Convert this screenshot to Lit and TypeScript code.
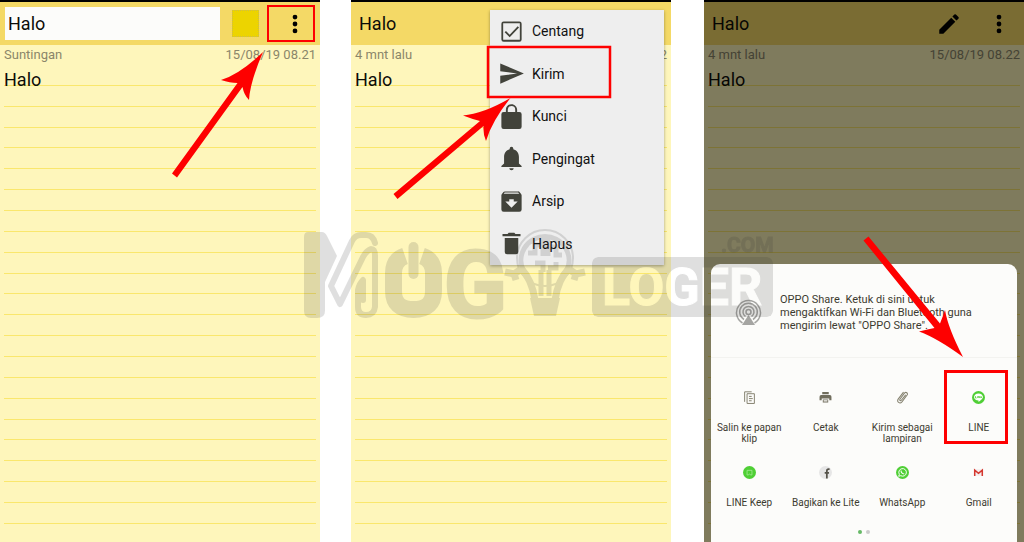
import { LitElement, html, svg, css, nothing, TemplateResult } from "lit";
import { customElement, property } from "lit/decorators.js";

const RULES = Array.from({ length: 22 }, (_, i) => i);

const ICONS: Record<string, string> = {
  check:
    "M19 3H5a2 2 0 0 0-2 2v14a2 2 0 0 0 2 2h14a2 2 0 0 0 2-2V5a2 2 0 0 0-2-2zm.4 16.4H4.6V4.6h14.8zM10.4 17.2L5.9 12.7l1.2-1.2 3.3 3.3 7.1-7.5 1.2 1.2z",
  send: "M2.01 21L23 12 2.01 3 2 10l15 2-15 2z",
  lock: "M18 8h-1V6c0-2.76-2.24-5-5-5S7 3.24 7 6v2H5a2 2 0 0 0-2 2v11a2 2 0 0 0 2 2h14a2 2 0 0 0 2-2V10a2 2 0 0 0-2-2zM8.7 6a3.3 3.3 0 0 1 6.6 0v2H8.7z",
  bell: "M12 22.5a2 2 0 0 0 2-1.8h-4a2 2 0 0 0 2 1.8zm6.6-6V10.6c0-3.4-1.9-6-5-6.8v-.7a1.6 1.6 0 0 0-3.2 0v.7c-3.1.8-5 3.4-5 6.8v5.9L3 18.6v1h18v-1z",
  archive:
    "M20.54 5.23l-1.39-1.68A1.45 1.45 0 0 0 18 3H6c-.47 0-.88.21-1.16.55L3.46 5.23C3.17 5.57 3 6.02 3 6.5V19a2 2 0 0 0 2 2h14a2 2 0 0 0 2-2V6.5c0-.48-.17-.93-.46-1.27zM12 17.5L6.5 12H10v-2h4v2h3.5zM5.12 5l.81-1h12l.94 1z",
  trash: "M6 19.5a2 2 0 0 0 2 2h8a2 2 0 0 0 2-2V7H6zM20 3.5h-4.5l-1-1h-5l-1 1H4v2h16z",
  pencil:
    "M3 17.25V21h3.75L17.81 9.94l-3.75-3.75zM20.71 7.04a1 1 0 0 0 0-1.41l-2.34-2.34a1 1 0 0 0-1.41 0l-1.83 1.83 3.75 3.75z",
  dots: "M12 7.8a2.2 2.2 0 1 0 0-4.4 2.2 2.2 0 0 0 0 4.4zm0 6.4a2.2 2.2 0 1 0 0-4.4 2.2 2.2 0 0 0 0 4.4zm0 6.4a2.2 2.2 0 1 0 0-4.4 2.2 2.2 0 0 0 0 4.4z",
};

const icon = (name: string) =>
  html`<svg class="icon" viewBox="0 0 24 24" aria-hidden="true"><path fill-rule="evenodd" d=${ICONS[name]}></path></svg>`;

const MENU: Array<[string, string]> = [
  ["check", "Centang"],
  ["send", "Kirim"],
  ["lock", "Kunci"],
  ["bell", "Pengingat"],
  ["archive", "Arsip"],
  ["trash", "Hapus"],
];

const TARGETS: Array<[string, TemplateResult]> = [
  [
    "Salin ke papan klip",
    svg`<g fill="none" stroke="#85826f" stroke-width="1.8"><path d="M3 20V1.500h13"/><path d="M7.500 5H21v18H7.500z"/><path d="M11 10h5M11 14h7M11 18h5"/></g>`,
  ],
  [
    "Cetak",
    svg`<path fill="#706d5c" fill-rule="evenodd" d="M6 2h12v4H6zM4 7.500h16a3 3 0 0 1 3 3V17h-4v-3H5v3H1v-6.500a3 3 0 0 1 3-3zM7 15.500h10V21H7zm1.500 1.500v2.500h7V17z"/>`,
  ],
  [
    "Kirim sebagai lampiran",
    svg`<path fill="none" stroke="#85826f" stroke-width="1.900" stroke-linecap="round" d="M17.500 7.500l-8 10c-1.200 1.200-3.500-.3-2.200-2.200L16 3.500c2.500-2.500 6.500.5 4.500 4L11 20c-4 4.500-10 0-7-5L13.500 2.500"/>`,
  ],
  [
    "LINE",
    svg`<circle cx="12" cy="12" r="12" fill="#4fcf35"/><path fill="#fff" d="M12 4.500c4.600 0 8.200 2.900 8.200 6.600 0 3.200-4.200 6.400-8.200 9.200v-2.800c-4.600 0-8.200-2.700-8.200-6.400s3.600-6.600 8.200-6.600z"/><path fill="none" stroke="#4fcf35" stroke-width="1.500" d="M6.500 9.500v3.500h2M10.500 9.500V13M12.500 13V9.500l2.500 3.500V9.500M17.500 10v3"/>`,
  ],
  [
    "LINE Keep",
    svg`<circle cx="12" cy="12" r="12" fill="#4fcf35"/><path fill="none" stroke="#a4ea92" stroke-width="1.500" d="M7.500 8h9v8.500h-2L12 15l-2.500 1.500h-2z"/>`,
  ],
  [
    "Bagikan ke Lite",
    svg`<circle cx="12" cy="12" r="12" fill="#e6e6e6"/><path fill="none" stroke="#55534a" stroke-width="3.200" d="M19.500 5.800h-1.800q-3.200 0-3.200 3.200v14M10.500 12.500h8"/>`,
  ],
  [
    "WhatsApp",
    svg`<circle cx="12" cy="12" r="12" fill="#4fcf35"/><path fill="none" stroke="#fff" stroke-width="1.800" d="M5 19l1.200-3.600a7 7 0 1 1 2.600 2.500z"/><path fill="none" stroke="#fff" stroke-width="2" d="M9.300 8.500c0 3.500 2.500 6 6 6.400"/>`,
  ],
  ["Gmail", svg`<path fill="#f3eeee" d="M4 6h16v12H4z"/><path fill="none" stroke="#d5382f" stroke-width="2.800" d="M5 18.500V7.500l7 6 7-6v11"/>`],
];

@customElement("note-screen")
class NoteScreen extends LitElement {
  @property() status = "";
  @property() date = "";
  @property({ type: Boolean }) editing = false;
  @property({ type: Boolean }) editable = false;
  @property({ type: Boolean }) dimmed = false;

  static styles = css`
    :host {
      display: flex;
      flex-direction: column;
      position: relative;
      overflow: hidden;
      min-width: 0;
      background: #fef6bb;
      border-top: 2px solid #000;
      font-family: Roboto, sans-serif;
      color: #0c0c08;
    }
    .bar {
      display: flex;
      align-items: center;
      height: 43px;
      padding: 0 12px 0 5px;
      box-sizing: border-box;
      background: #f4d966;
      font-size: 18px;
    }
    .title {
      flex: 1;
      min-width: 0;
      margin: 0;
      padding: 0 3px;
      font: inherit;
      color: inherit;
    }
    input.title {
      height: 33px;
      border: 0;
      border-radius: 0;
      box-sizing: border-box;
      background: #fcfcfa;
      margin-right: 12px;
    }
    button {
      display: grid;
      place-items: center;
      padding: 0;
      border: 0;
      background: none;
      width: 26px;
      height: 26px;
      color: #000;
    }
    .swatch {
      width: 27px;
      height: 27px;
      margin-right: 23px;
      background: #ecd400;
      border: 1px dotted #cdbb4a;
    }
    .edit {
      margin-right: 24px;
    }
    .icon {
      width: 26px;
      height: 26px;
      fill: currentColor;
    }
    .meta {
      display: flex;
      justify-content: space-between;
      padding: 0 4px;
      font-size: 13px;
      line-height: 20px;
      color: #8b866a;
    }
    .paper {
      flex: 1;
      display: flex;
      flex-direction: column;
      padding: 0 4px 18px;
      font-size: 18px;
      line-height: 30px;
    }
    .rule {
      flex: 1 1 0;
      min-height: 0;
      border-bottom: 1px solid #fae76c;
    }
    .dim {
      position: absolute;
      inset: 0;
      background: rgba(0, 0, 0, 0.5);
    }
  `;

  render() {
    return html`
      <header class="bar">
        ${this.editing
          ? html`<input class="title" type="text" aria-label="Judul" .value=${"Halo"} />
              <button class="swatch" aria-label="Warna"></button>`
          : html`<h1 class="title">Halo</h1>`}
        ${this.editable ? html`<button class="edit" aria-label="Edit">${icon("pencil")}</button>` : nothing}
        <button aria-label="Menu">${icon("dots")}</button>
      </header>
      <div class="meta"><span>${this.status}</span><time>${this.date}</time></div>
      <div class="paper">${RULES.map((i) => html`<div class="rule">${i === 0 ? "Halo" : nothing}</div>`)}</div>
      ${this.dimmed ? html`<div class="dim"></div>` : nothing}
      <slot></slot>
    `;
  }
}

@customElement("app-root")
class AppRoot extends LitElement {
  static styles = css`
    :host {
      display: block;
      position: relative;
      background: #fff;
      font-family: Roboto, sans-serif;
    }
    .screens {
      display: grid;
      grid-template-columns: 1fr 31px 1fr 33px 1fr;
      min-height: 100vh;
    }
    .first {
      grid-column: 1;
    }
    .second {
      grid-column: 3;
    }
    .third {
      grid-column: 5;
    }
    button {
      border: 0;
      padding: 0;
      background: none;
      font: inherit;
      color: inherit;
    }
    .menu {
      position: absolute;
      top: 8px;
      right: 7px;
      width: 174px;
      height: 255px;
      display: grid;
      grid-auto-rows: 1fr;
      background: #eee;
      box-shadow: 0 1px 3px rgba(0, 0, 0, 0.35);
    }
    .item {
      display: flex;
      align-items: center;
      gap: 7px;
      padding-left: 8px;
      font-size: 14px;
      color: #111;
      text-align: left;
    }
    .icon {
      width: 27px;
      height: 27px;
      fill: #42433b;
    }
    .sheet {
      position: absolute;
      left: 7px;
      right: 7px;
      bottom: 0;
      height: 278px;
      display: flex;
      flex-direction: column;
      border-radius: 9px 9px 0 0;
      background: #fcfcfa;
      color: #3c3b30;
    }
    .nearby {
      display: flex;
      flex: none;
      align-items: center;
      gap: 18px;
      height: 94px;
      padding: 4px 24px 0;
      box-sizing: border-box;
      border-bottom: 1px solid #f3f3f0;
      font-size: 11px;
      line-height: 13px;
    }
    .nearby svg {
      flex: none;
      width: 27px;
      height: 27px;
    }
    .nearby p {
      margin: 0;
    }
    .targets {
      display: grid;
      flex: none;
      grid-template-columns: repeat(4, 1fr);
      grid-template-rows: 75px 58px;
      padding-top: 33px;
    }
    .target {
      display: flex;
      flex-direction: column;
      align-items: center;
      gap: 18px;
      padding: 0 4px;
      font-size: 10px;
      line-height: 11px;
    }
    .target svg {
      flex: none;
      width: 13px;
      height: 13px;
    }
    .dots {
      display: flex;
      justify-content: center;
      gap: 4px;
      padding-top: 6px;
    }
    .dot {
      width: 4px;
      height: 4px;
      border-radius: 50%;
      background: #ccc;
    }
    .dot.on {
      background: #66b966;
    }
    .overlay {
      position: absolute;
      top: 0;
      left: 0;
      width: 100%;
      pointer-events: none;
    }
    .mark {
      font-family: "Liberation Sans Narrow", Roboto, sans-serif;
      font-weight: 700;
    }
  `;

  private overlay() {
    return html`<svg class="overlay" viewBox="0 0 1024 542" aria-hidden="true">
      <defs>
        <mask id="cut" maskUnits="userSpaceOnUse" x="590" y="250" width="190" height="75">
          <rect x="592" y="257" width="181" height="60" rx="6" fill="#fff" />
          <text class="mark" x="602" y="305" font-size="52" fill="#000" stroke="#000" stroke-width="1">LOGER</text>
        </mask>
      </defs>
      <g opacity="0.15">
        <path fill="#333" d="M308 232H322Q325 232 327 236L337 256L325 282V311Q325 318 317 318H311Q304 318 304 311V237Q304 232 308 232z" />
        <g fill="none" stroke="#333" stroke-width="6" stroke-linejoin="round" stroke-linecap="round">
          <path d="M375 243Q373 235 366 235H361Q355 235 352 241L331 286L340 304L363 257Q366 251 371 249Q375 249 375 256V307Q374 315 366 315Q358 315 358 307V290Q359 284 363 280V300" />
        </g>
        <path fill="none" stroke="#333" stroke-width="17" d="M405 256Q393.500 260 393.500 273V291Q393.500 309.500 413.500 309.500T433.500 291V273Q433.500 260 422 256" />
        <path stroke="#333" stroke-width="10" stroke-linecap="round" d="M413.500 247V274" />
        <text class="mark" x="444" y="317" font-size="92" fill="#333" stroke="#333" stroke-width="3">G</text>
        <g fill="none" stroke="#333">
          <circle cx="545" cy="258" r="28" stroke-width="2" />
          <path stroke-width="5" d="M524 272A24 24 0 1 1 566 272M543 238V256M548 238V256M543 245H535V253H528M548 247H556V255H562M535 263H543V272M548 268H556V262" />
          <path stroke-width="7" d="M521 268Q532 280 535 300M569 268Q558 280 555 300M505 272L514 274L520 270M585 272L576 274L570 270M514 274L516 280M576 274L574 280" />
          <path stroke-width="5" d="M541 270V296M549 270V296" />
        </g>
        <path fill="#333" d="M530 298H560L556 316H534z" />
        <rect x="592" y="257" width="181" height="60" rx="6" fill="#333" mask="url(#cut)" />
        <text class="mark" x="721" y="252" font-size="21" fill="#333" stroke="#333">.COM</text>
      </g>
      <g fill="none" stroke="#fe0000">
        <rect x="268" y="6" width="46" height="35" stroke-width="2" />
        <rect x="488" y="47" width="122" height="50" stroke-width="2.5" />
        <rect x="945.5" y="371.5" width="61" height="71" stroke-width="3" />
      </g>
      <g fill="#fe0000">
        <path d="M263 52Q240 74 221 80Q230 83 237.500 83L172 173.500L177 177.500L242.500 87Q244 95 249 100Q250 82 263 52z" />
        <path d="M510.500 98Q483 114 463 115.500Q472 119 480 121L393.500 194L397.500 199L483.500 126Q483 135 486 141Q492 121 510.500 98z" />
        <path d="M963 357Q937 338 919 331.500Q928 329 934.500 328L863.500 240.500L868.500 236.500L940 323.500Q943 316 945 310Q948 328 963 357z" />
      </g>
    </svg>`;
  }

  render() {
    return html`
      <main class="screens">
        <note-screen class="first" status="Suntingan" date="15/08/19 08.21" editing></note-screen>
        <note-screen class="second" status="4 mnt lalu" date="15/08/19 08.22">
          <nav class="menu">${MENU.map(([name, label]) => html`<button class="item">${icon(name)}<span>${label}</span></button>`)}</nav>
        </note-screen>
        <note-screen class="third" status="4 mnt lalu" date="15/08/19 08.22" editable dimmed>
          <section class="sheet">
            <div class="nearby">
              <svg viewBox="0 0 27 27" aria-hidden="true">
                <g fill="none" stroke="#a5a5a2" stroke-width="1.500">
                  <path d="M7.500 24A12 12 0 1 1 19.500 24" />
                  <path d="M9 20.500A8.800 8.800 0 1 1 18 20.500" />
                  <path d="M10.500 17.500A5.500 5.500 0 1 1 16.500 17.500" />
                  <circle cx="13.500" cy="13" r="2.500" />
                </g>
                <path fill="#a5a5a2" d="M13.500 16L20 26H7z" />
              </svg>
              <p>OPPO Share. Ketuk di sini untuk mengaktifkan Wi-Fi dan Bluetooth guna mengirim lewat "OPPO Share".</p>
            </div>
            <div class="targets">
              ${TARGETS.map(
                ([label, art]) =>
                  html`<button class="target"><svg viewBox="0 0 24 24" aria-hidden="true">${art}</svg><span>${label}</span></button>`
              )}
            </div>
            <div class="dots"><span class="dot on"></span><span class="dot"></span></div>
          </section>
        </note-screen>
      </main>
      ${this.overlay()}
    `;
  }
}
